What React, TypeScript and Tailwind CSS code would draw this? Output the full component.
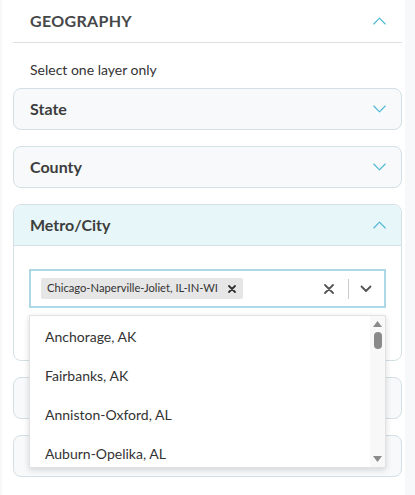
import React from "react";

const OPTIONS = ["Anchorage, AK", "Fairbanks, AK", "Anniston-Oxford, AL", "Auburn-Opelika, AL"];

function Chevron({ up = false }: { up?: boolean }) {
  return (
    <svg width="13" height="8" viewBox="0 0 13 8" fill="none" className="shrink-0">
      <polyline
        points={up ? "0.8,7 6.5,1.2 12.2,7" : "0.8,1 6.5,6.8 12.2,1"}
        stroke="#4cb7d6"
        strokeWidth="1.1"
        strokeLinecap="round"
        strokeLinejoin="round"
      />
    </svg>
  );
}

function LayerCard({ title }: { title?: string }) {
  return (
    <div className="flex h-[42px] items-center justify-between rounded-lg border border-[#d3e0e5] bg-[#f7f9fb] pl-[16px] pr-[15px]">
      <span className="text-[16px] font-bold text-[#3d3d3d]">{title}</span>
      <Chevron />
    </div>
  );
}

export default function App() {
  return (
    <div className="min-h-[495px] w-[415px] bg-[#f7f8f9] font-['Lato','Noto_Sans',sans-serif]">
      <div className="ml-[2px] min-h-[495px] w-[403px] bg-white pl-[11px] pr-[3px]">
        <div className="flex h-[43px] items-center justify-between border-b border-[#dcdfe2] pl-[17px] pr-[16px]">
          <span className="text-[16px] font-bold tracking-[0.02em] text-[#45474a]">GEOGRAPHY</span>
          <Chevron up />
        </div>
        <p className="mt-[16px] pl-[17px] text-[14px] text-[#333]">Select one layer only</p>

        <div className="mt-[8px] flex flex-col gap-[16px]">
          <LayerCard title="State" />
          <LayerCard title="County" />

          <div className="relative rounded-lg border border-[#d3e0e5] bg-white">
            <div className="flex h-[41px] items-center justify-between rounded-t-lg border-b border-[#d3e0e5] bg-[#e7f6f8] pl-[16px] pr-[15px]">
              <span className="text-[16px] font-bold text-[#3d3d3d]">Metro/City</span>
              <Chevron up />
            </div>
            <div className="px-[15px] pb-[52px] pt-[23px]">
              <div className="flex h-[39px] items-center border-2 border-[#add8e6] bg-white pl-[10px] pr-[10px]">
                <div className="flex h-[21px] items-center gap-[10px] rounded-[2px] bg-[#e6e6e6] pl-[6px] pr-[7px]">
                  <span className="text-[11.2px] text-[#333]">Chicago-Naperville-Joliet, IL-IN-WI</span>
                  <svg width="8" height="8" viewBox="0 0 8 8">
                    <path d="M1 1 L7 7 M7 1 L1 7" stroke="#333" strokeWidth="1.8" strokeLinecap="round" />
                  </svg>
                </div>
                <div className="flex-1" />
                <svg width="10" height="10" viewBox="0 0 10 10" className="mr-[14px]">
                  <path d="M1 1 L9 9 M9 1 L1 9" stroke="#555" strokeWidth="1.8" strokeLinecap="round" />
                </svg>
                <div className="h-[20px] w-px bg-[#cccccc]" />
                <svg width="12" height="8" viewBox="0 0 12 8" className="ml-[11px] mr-[2px]">
                  <polyline points="1.5,1.5 6,6 10.5,1.5" fill="none" stroke="#555" strokeWidth="1.8" strokeLinecap="round" strokeLinejoin="round" />
                </svg>
              </div>
            </div>

            <div className="absolute left-[15px] top-[110px] z-10 flex h-[153px] w-[357px] overflow-hidden border border-[#e2e2e2] bg-white shadow-[0_2px_6px_rgba(0,0,0,0.15)]">
              <ul className="flex-1 pt-[2px]">
                {OPTIONS.map((o) => (
                  <li key={o} className="flex h-[37px] items-center pl-[15px] text-[14px] text-[#333] [&:not(:first-child)]:mt-[2px]">
                    {o}
                  </li>
                ))}
              </ul>
              <div className="flex w-[15px] flex-col items-center bg-[#f8f8f8] py-[5px]">
                <svg width="9" height="6" viewBox="0 0 9 6">
                  <polygon points="4.5,0 9,6 0,6" fill="#8a8a8a" />
                </svg>
                <div className="mt-[5px] h-[17px] w-[8px] rounded-full bg-[#8a8a8a]" />
                <div className="flex-1" />
                <svg width="9" height="6" viewBox="0 0 9 6">
                  <polygon points="0,0 9,0 4.5,6" fill="#8a8a8a" />
                </svg>
              </div>
            </div>
          </div>

          <LayerCard />
          <LayerCard />
        </div>
      </div>
    </div>
  );
}
